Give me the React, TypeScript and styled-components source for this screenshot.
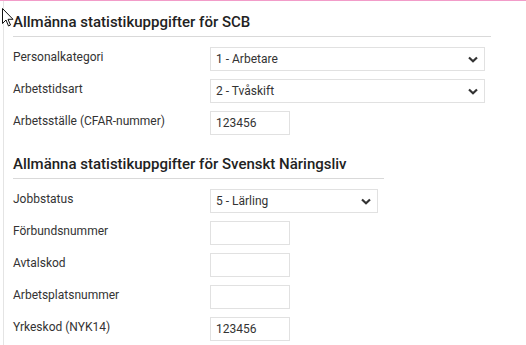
import styled, { createGlobalStyle } from 'styled-components';

const GlobalStyle = createGlobalStyle`
  html, body {
    margin: 0;
    padding: 0;
    background: #fff;
  }
  body {
    font-family: Roboto, "Liberation Sans", Arial, sans-serif;
    color: #333;
  }
`;

const Page = styled.div`
  position: relative;
  width: 526px;
  height: 345px;
  overflow: hidden;
  border-top: 1px solid #f29cc9;
  box-sizing: border-box;
`;
const Panel = styled.div`
  margin-left: 3px;
  padding: 11px 0 0 9px;
  border-left: 1px solid #e4e4e4;
  min-height: 340px;
`;
const Section = styled.section<{ width: number }>`
  width: ${(p) => p.width}px;
  & + & {
    margin-top: 19px;
  }
`;
const Heading = styled.h3`
  margin: 0 0 10px;
  padding-bottom: 4px;
  border-bottom: 1px solid #d9d9d9;
  font-size: 15px;
  line-height: 20px;
  font-weight: 500;
  color: #222;
`;
const Rows = styled.div`
  display: flex;
  flex-direction: column;
  gap: 8px;
`;
const Row = styled.div`
  display: grid;
  grid-template-columns: 197px auto;
  align-items: center;
  height: 24px;
`;
const Label = styled.span`
  font-size: 12px;
  color: #333;
  margin-top: -4px;
`;
const Box = styled.div<{ width: number }>`
  box-sizing: border-box;
  width: ${(p) => p.width}px;
  height: 24px;
  border: 1px solid #e1e1e1;
  display: flex;
  align-items: center;
  justify-content: space-between;
  padding: 0 5px 0 5px;
  font-size: 12px;
  color: #333;
`;
const Chevron = styled.svg`
  width: 10px;
  height: 7px;
  margin-right: 1px;
`;
const Cursor = styled.svg`
  position: absolute;
  left: 2px;
  top: 7px;
`;

function Select({ value, width }: { value: string; width: number }) {
  return (
    <Box width={width}>
      <span>{value}</span>
      <Chevron viewBox="0 0 10 7">
        <path d="M1 1.5 L5 5.2 L9 1.5" fill="none" stroke="#333" strokeWidth="2.2" />
      </Chevron>
    </Box>
  );
}

const scb = [
  { label: 'Personalkategori', select: '1 - Arbetare' },
  { label: 'Arbetstidsart', select: '2 - Tvåskift' },
  { label: 'Arbetsställe (CFAR-nummer)', input: '123456' },
];

const sn = [
  { label: 'Jobbstatus', select: '5 - Lärling' },
  { label: 'Förbundsnummer', input: '' },
  { label: 'Avtalskod', input: '' },
  { label: 'Arbetsplatsnummer', input: '' },
  { label: 'Yrkeskod (NYK14)', input: '123456' },
];

export default function App() {
  return (
    <Page>
      <GlobalStyle />
      <Panel>
        <Section width={478}>
          <Heading>Allmänna statistikuppgifter för SCB</Heading>
          <Rows>
            {scb.map((r) => (
              <Row key={r.label}>
                <Label>{r.label}</Label>
                {r.select ? <Select value={r.select} width={275} /> : <Box width={80}>{r.input}</Box>}
              </Row>
            ))}
          </Rows>
        </Section>
        <Section width={371}>
          <Heading>Allmänna statistikuppgifter för Svenskt Näringsliv</Heading>
          <Rows>
            {sn.map((r) => (
              <Row key={r.label}>
                <Label>{r.label}</Label>
                {r.select ? <Select value={r.select} width={168} /> : <Box width={80}>{r.input}</Box>}
              </Row>
            ))}
          </Rows>
        </Section>
      </Panel>
      <Cursor width="14" height="20" viewBox="0 0 14 20">
        <path d="M0.5 0.5 L0.5 15.5 L4 12 L6.5 18 L8.5 17 L6 11.3 L11 11.3 Z" fill="#fff" stroke="#111" strokeWidth="1" />
      </Cursor>
    </Page>
  );
}
